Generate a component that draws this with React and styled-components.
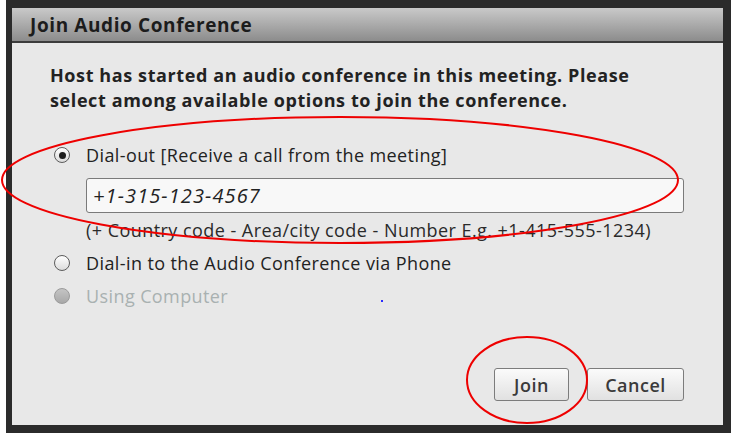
import React from "react";
import styled, { createGlobalStyle } from "styled-components";

// Page reset, the screenshot sits on a white page.
const GlobalStyle = createGlobalStyle`
  html, body {
    margin: 0;
    padding: 0;
    background: #ffffff;
  }
  body {
    font-family: "Open Sans", "Noto Sans", sans-serif;
  }
`;

// Dark outer frame around the dialog.
const Frame = styled.div`
  position: relative;
  box-sizing: border-box;
  width: 725px;
  height: 433px;
  margin-left: 6px;
  padding: 8px 8px 8px 6px;
  background: #2b2b2b;
`;

const Dialog = styled.div`
  display: flex;
  flex-direction: column;
  height: 100%;
  background: #e8e8e8;
`;

const TitleBar = styled.div`
  display: flex;
  align-items: center;
  height: 33px;
  padding-left: 18px;
  background: linear-gradient(#c9c9c9, #8c8c8c);
  border-bottom: 2px solid #3c3c3c;
  font-size: 19px;
  font-weight: 700;
  color: #1c1c1c;
  letter-spacing: 0.6px;
`;

const Body = styled.div`
  display: flex;
  flex-direction: column;
  flex-grow: 1;
  padding: 20px 39px 24px 38px;
`;

const Message = styled.p`
  margin: 0;
  font-size: 18px;
  line-height: 25px;
  font-weight: 700;
  color: #222;
  letter-spacing: 0.6px;
`;

const Options = styled.div`
  display: flex;
  flex-direction: column;
  margin-top: 29px;
`;

const OptionRow = styled.label`
  display: flex;
  align-items: center;
  gap: 16px;
  height: 26px;
  margin-top: ${(p) => p.$top || 0}px;
  padding-left: 4px;
  font-size: 18px;
  color: ${(p) => (p.$disabled ? "#a9b1b1" : "#222")};
  letter-spacing: 0.4px;
`;

// Radio circle drawn with CSS: selected, empty or disabled.
const Radio = styled.span`
  position: relative;
  flex-shrink: 0;
  box-sizing: border-box;
  width: 16px;
  height: 16px;
  border-radius: 50%;
  border: 1.5px solid ${(p) => (p.$disabled ? "#9a9a9a" : "#5c5c5c")};
  background: ${(p) =>
    p.$disabled
      ? "linear-gradient(#c4c4c4, #a8a8a8)"
      : "linear-gradient(#ffffff, #dcdcdc)"};

  &::after {
    content: "";
    display: ${(p) => (p.$checked ? "block" : "none")};
    position: absolute;
    left: 50%;
    top: 50%;
    width: 7px;
    height: 7px;
    margin: -3.5px 0 0 -3.5px;
    border-radius: 50%;
    background: #1e1e1e;
  }
`;

const DialOutDetails = styled.div`
  display: flex;
  flex-direction: column;
  padding-left: 36px;
`;

const PhoneInput = styled.div`
  display: flex;
  align-items: center;
  box-sizing: border-box;
  height: 35px;
  margin-top: 10px;
  padding-left: 6px;
  background: #f8f8f8;
  border: 1.5px solid #7a7a7a;
  border-radius: 3px;
  font-size: 20px;
  font-style: italic;
  color: #222;
  letter-spacing: 1.1px;
`;

const Hint = styled.div`
  margin-top: 7px;
  height: 20px;
  line-height: 20px;
  font-size: 18px;
  color: #2a2a2a;
  letter-spacing: 0.45px;
`;

const ButtonRow = styled.div`
  display: flex;
  justify-content: flex-end;
  gap: 18px;
  margin-top: auto;
`;

const Button = styled.button`
  box-sizing: border-box;
  width: ${(p) => p.$width}px;
  height: 33px;
  padding: 0;
  border: 1.5px solid #7c7c7c;
  border-radius: 3px;
  background: linear-gradient(#fbfbfb, #e1e1e1);
  font-family: "Open Sans", "Noto Sans", sans-serif;
  font-size: 18px;
  font-weight: 600;
  color: #3a3a3a;
  letter-spacing: 0.5px;
`;

// Red hand-drawn annotation ellipses lying over the dialog.
const Annotation = styled.svg`
  position: absolute;
  left: -6px;
  top: 0;
  width: 731px;
  height: 436px;
  pointer-events: none;
`;

const Speck = styled.span`
  position: absolute;
  left: 375px;
  top: 300px;
  width: 2px;
  height: 2px;
  background: #2a2aff;
`;

function App() {
  return (
    <>
      <GlobalStyle />
      <Frame>
        <Dialog>
          <TitleBar>Join Audio Conference</TitleBar>
          <Body>
            <Message>
              Host has started an audio conference in this meeting. Please
              <br />
              select among available options to join the conference.
            </Message>
            <Options>
              <OptionRow>
                <Radio $checked />
                Dial-out [Receive a call from the meeting]
              </OptionRow>
              <DialOutDetails>
                <PhoneInput>+1-315-123-4567</PhoneInput>
                <Hint>
                  (+ Country code - Area/city code - Number E.g. +1-415-555-1234)
                </Hint>
              </DialOutDetails>
              <OptionRow $top={10}>
                <Radio />
                Dial-in to the Audio Conference via Phone
              </OptionRow>
              <OptionRow $top={7} $disabled>
                <Radio $disabled />
                Using Computer
              </OptionRow>
            </Options>
            <ButtonRow>
              <Button $width={75}>Join</Button>
              <Button $width={97}>Cancel</Button>
            </ButtonRow>
          </Body>
        </Dialog>
        <Speck />
        <Annotation viewBox="0 0 731 436">
          <ellipse cx="340" cy="180" rx="338" ry="63" fill="none" stroke="#ee0000" strokeWidth="2" />
          <ellipse cx="527" cy="380" rx="60" ry="43" fill="none" stroke="#ee0000" strokeWidth="2" />
        </Annotation>
      </Frame>
    </>
  );
}

export default App;
